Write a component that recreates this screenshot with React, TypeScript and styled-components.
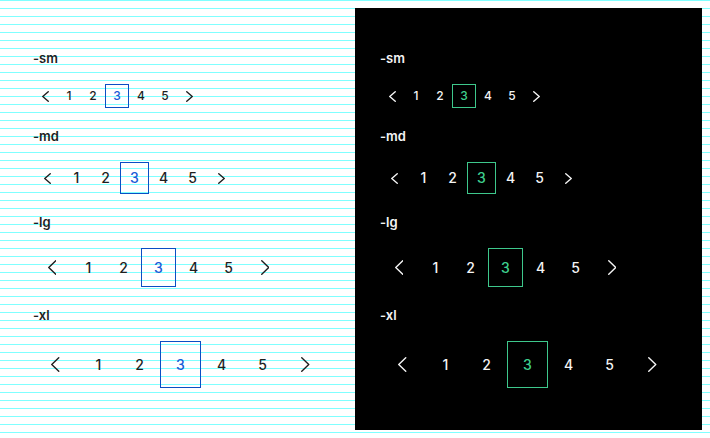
import React from "react";
import styled, { createGlobalStyle } from "styled-components";

const GlobalStyle = createGlobalStyle`
  html, body {
    margin: 0;
    padding: 0;
  }
  body {
    margin: 8px;
    font-family: Inter, "Noto Sans", "Liberation Sans", sans-serif;
    background-color: #ffffff;
    background-image: repeating-linear-gradient(
      to bottom,
      #80ffff 0px,
      #80ffff 1px,
      transparent 1px,
      transparent 8px
    );
  }
`;

type SizeKey = "sm" | "md" | "lg" | "xl";

interface SizeSpec {
  h: number;
  dw: number;
  aw: number;
  fs: number;
  cw: number;
  ch: number;
}

const SIZES: Record<SizeKey, SizeSpec> = {
  sm: { h: 24, dw: 24, aw: 24, fs: 12, cw: 7, ch: 11 },
  md: { h: 32, dw: 29, aw: 29, fs: 14, cw: 7, ch: 11 },
  lg: { h: 39, dw: 35, aw: 38, fs: 14, cw: 8.5, ch: 15 },
  xl: { h: 47, dw: 41, aw: 45, fs: 14, cw: 8.5, ch: 15 },
};

interface Theme {
  bg: string;
  text: string;
  accent: string;
  accentText: string;
}

const LIGHT: Theme = {
  bg: "transparent",
  text: "#1f1f1f",
  accent: "#0a4fc4",
  accentText: "#1a5cd6",
};

const DARK: Theme = {
  bg: "#000000",
  text: "#f4f4f4",
  accent: "#3ec88c",
  accentText: "#3ecf8e",
};

const Page = styled.div`
  display: grid;
  grid-template-columns: 347px 347px;
  height: 422px;
`;

const Panel = styled.section<{ $bg: string; $text: string }>`
  background: ${(p) => p.$bg};
  color: ${(p) => p.$text};
  padding: 42px 25px 0 25px;
  display: flex;
  flex-direction: column;
  gap: 20px;
`;

const Section = styled.div`
  display: flex;
  flex-direction: column;
`;

const Label = styled.div`
  font-size: 13px;
  line-height: 16px;
  font-weight: 600;
  margin-bottom: 18px;
`;

const Row = styled.nav`
  display: flex;
  align-items: center;
`;

const Item = styled.div<{
  $w: number;
  $h: number;
  $fs: number;
  $active?: boolean;
  $accent: string;
  $accentText: string;
}>`
  box-sizing: border-box;
  width: ${(p) => p.$w}px;
  height: ${(p) => p.$h}px;
  display: flex;
  align-items: center;
  justify-content: center;
  font-size: ${(p) => p.$fs}px;
  font-weight: 500;
  line-height: 1;
  border: 1px solid ${(p) => (p.$active ? p.$accent : "transparent")};
  color: ${(p) => (p.$active ? p.$accentText : "inherit")};
  flex: none;
`;

const Chevron: React.FC<{ dir: "left" | "right"; w: number; h: number }> = ({
  dir,
  w,
  h,
}) => {
  const m = 0.75;
  const pts =
    dir === "left"
      ? `${w - m},${m} ${m},${h / 2} ${w - m},${h - m}`
      : `${m},${m} ${w - m},${h / 2} ${m},${h - m}`;
  return (
    <svg width={w} height={h} viewBox={`0 0 ${w} ${h}`} fill="none">
      <polyline
        points={pts}
        stroke="currentColor"
        strokeWidth={1.4}
        strokeLinecap="round"
        strokeLinejoin="round"
      />
    </svg>
  );
};

const Pagination: React.FC<{ size: SizeKey; theme: Theme }> = ({
  size,
  theme,
}) => {
  const s = SIZES[size];
  const common = {
    $h: s.h,
    $fs: s.fs,
    $accent: theme.accent,
    $accentText: theme.accentText,
  };
  return (
    <Row>
      <Item $w={s.aw} {...common}>
        <Chevron dir="left" w={s.cw} h={s.ch} />
      </Item>
      {[1, 2, 3, 4, 5].map((n) => (
        <Item key={n} $w={s.dw} $active={n === 3} {...common}>
          {n}
        </Item>
      ))}
      <Item $w={s.aw} {...common}>
        <Chevron dir="right" w={s.cw} h={s.ch} />
      </Item>
    </Row>
  );
};

const SIZE_LIST: SizeKey[] = ["sm", "md", "lg", "xl"];

const Demo: React.FC<{ theme: Theme }> = ({ theme }) => (
  <Panel $bg={theme.bg} $text={theme.text}>
    {SIZE_LIST.map((k) => (
      <Section key={k}>
        <Label>-{k}</Label>
        <Pagination size={k} theme={theme} />
      </Section>
    ))}
  </Panel>
);

export default function App() {
  return (
    <>
      <GlobalStyle />
      <Page>
        <Demo theme={LIGHT} />
        <Demo theme={DARK} />
      </Page>
    </>
  );
}
